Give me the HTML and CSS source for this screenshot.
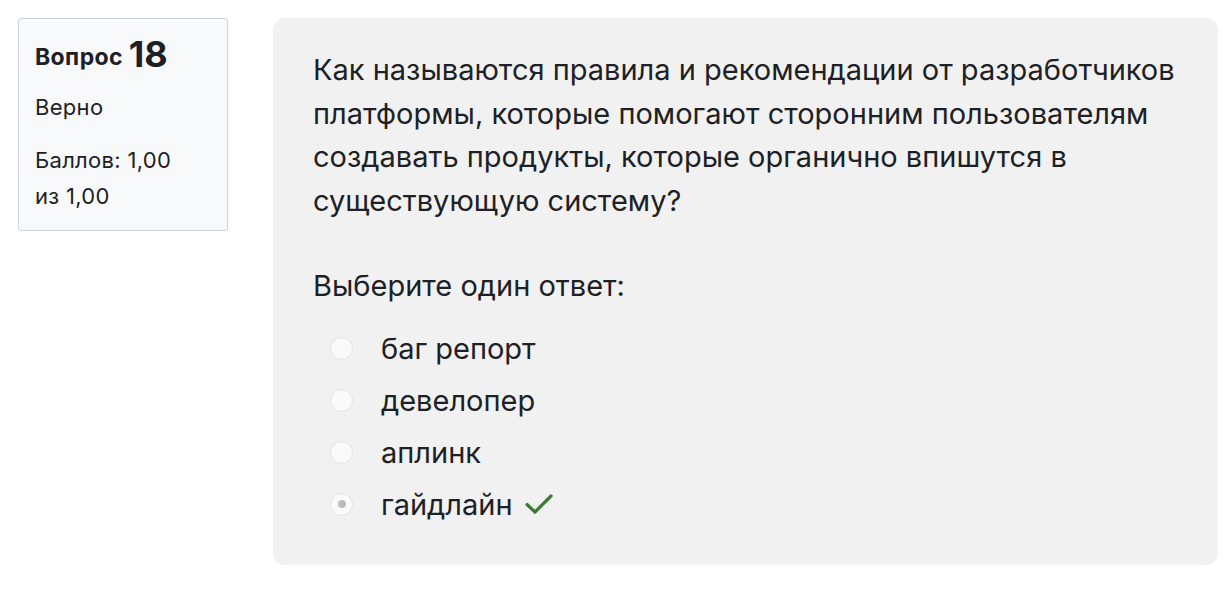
FILE: index.html
```html
<!DOCTYPE html>
<html lang="ru">
<head>
    <meta charset="UTF-8">
    <meta name="viewport" content="width=device-width, initial-scale=1.0">
    <title>Вопрос 18</title>
    <link rel="stylesheet" href="styles.css">
</head>
<body>
<div class="que">
    <div class="info">
        <h3 class="no">Вопрос <span class="qno">18</span></h3>
        <div class="state">Верно</div>
        <div class="grade">Баллов: 1,00 из&nbsp;1,00</div>
    </div>
    <div class="content">
        <div class="qtext">Как называются правила и рекомендации от разработчиков платформы, которые помогают сторонним пользователям создавать продукты, которые органично впишутся в существующую систему?</div>
        <div class="prompt">Выберите один ответ:</div>
        <div class="answer">
            <div class="option"><span class="radio"></span><span>баг репорт</span></div>
            <div class="option"><span class="radio"></span><span>девелопер</span></div>
            <div class="option"><span class="radio"></span><span>аплинк</span></div>
            <div class="option"><span class="radio checked"></span><span>гайдлайн</span>
                <svg class="tick" width="28" height="22" viewBox="0 0 28 22">
                    <path d="M2 11.5 L10 19 L26 3" fill="none" stroke="#3e7a36" stroke-width="3.2" stroke-linecap="round" stroke-linejoin="round"/>
                </svg>
            </div>
        </div>
    </div>
</div>
</body>
</html>
```

FILE: styles.css
```css
body {
    margin: 0;
    background-color: #fff;
    font-family: Inter, "Noto Sans", sans-serif;
    color: #1d2125;
}

.que {
    display: flex;
    align-items: flex-start;
    padding: 18px 8px 0 18px;
    gap: 45px;
}

.info {
    width: 176px;
    flex-shrink: 0;
    padding: 12px 16px 16px 16px;
    background-color: #f8f9fa;
    border: 1px solid #cfd3d8;
    border-radius: 3px;
}

.no {
    margin: 0 0 10px 0;
    font-size: 23px;
    letter-spacing: 0.4px;
    font-weight: 700;
    line-height: 46px;
}

.qno {
    font-size: 36px;
    letter-spacing: 0;
    vertical-align: -2px;
}

.state {
    font-size: 22px;
    letter-spacing: 0.3px;
    line-height: 34px;
    margin-bottom: 18px;
}

.grade {
    font-size: 22px;
    letter-spacing: 0.3px;
    line-height: 36px;
}

.content {
    flex: 1;
    background-color: #f1f1f1;
    border-radius: 12px;
    padding: 30px 40px 35px 40px;
}

.qtext {
    font-size: 29px;
    line-height: 43.5px;
}

.prompt {
    font-size: 29px;
    line-height: 43px;
    margin-top: 42px;
}

.answer {
    margin-top: 15px;
    padding-left: 17px;
}

.option {
    display: flex;
    align-items: center;
    height: 52px;
    font-size: 29px;
}

.radio {
    width: 21px;
    height: 21px;
    border-radius: 50%;
    border: 1px solid #e2e2e2;
    background-color: #fafafa;
    margin-right: 28px;
    display: flex;
    align-items: center;
    justify-content: center;
}

.radio.checked::after {
    content: "";
    width: 8px;
    height: 8px;
    border-radius: 50%;
    background-color: #bdbdbd;
}

.tick {
    margin-left: 12px;
}
```
